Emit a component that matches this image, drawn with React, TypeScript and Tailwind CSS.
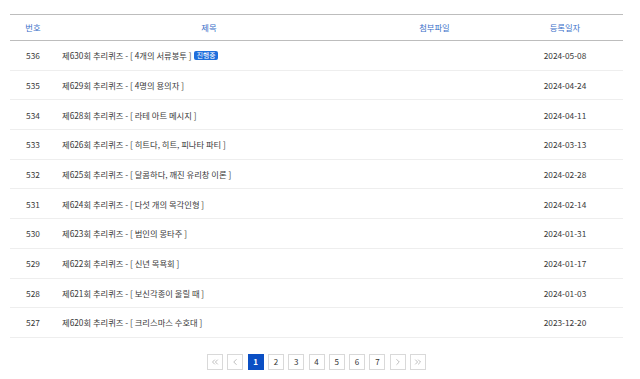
import { ChevronLeft, ChevronRight, ChevronsLeft, ChevronsRight } from 'lucide-react';

const rows = [
  { no: 536, title: '제630회 추리퀴즈 - [ 4개의 서류봉투 ]', date: '2024-05-08', live: true },
  { no: 535, title: '제629회 추리퀴즈 - [ 4명의 용의자 ]', date: '2024-04-24' },
  { no: 534, title: '제628회 추리퀴즈 - [ 라테 아트 메시지 ]', date: '2024-04-11' },
  { no: 533, title: '제626회 추리퀴즈 - [ 히트다, 히트, 피나타 파티 ]', date: '2024-03-13' },
  { no: 532, title: '제625회 추리퀴즈 - [ 달콤하다, 깨진 유리창 이론 ]', date: '2024-02-28' },
  { no: 531, title: '제624회 추리퀴즈 - [ 다섯 개의 목각인형 ]', date: '2024-02-14' },
  { no: 530, title: '제623회 추리퀴즈 - [ 범인의 몽타주 ]', date: '2024-01-31' },
  { no: 529, title: '제622회 추리퀴즈 - [ 신년 목욕회 ]', date: '2024-01-17' },
  { no: 528, title: '제621회 추리퀴즈 - [ 보신각종이 울릴 때 ]', date: '2024-01-03' },
  { no: 527, title: '제620회 추리퀴즈 - [ 크리스마스 수호대 ]', date: '2023-12-20' },
];

const pageBtn = 'flex h-[16px] w-[16px] items-center justify-center border border-[#d9d9d9] text-[8px] text-[#333]';

export default function App() {
  return (
    <div className="w-[640px] h-[379px] bg-white pt-[14px] font-['Noto_Sans_CJK_KR','Noto_Sans',sans-serif] text-[8.3px] text-[#3a3a3a]">
      <div className="ml-[10px] w-[613px]">
        <div className="flex h-[27px] items-center border-t border-b border-[#bdbdbd] text-[#3b6fc9]">
          <div className="w-[46px] text-center">번호</div>
          <div className="w-[306px] text-center">제목</div>
          <div className="w-[145px] text-center">첨부파일</div>
          <div className="w-[116px] text-center">등록일자</div>
        </div>
        {rows.map((r) => (
          <div key={r.no} className="flex h-[29.7px] items-center border-b border-[#eeeeee]">
            <div className="w-[46px] text-center">{r.no}</div>
            <div className="flex w-[306px] items-center pl-[6px]">
              <span>{r.title}</span>
              {r.live && (
                <span className="ml-[2px] rounded-[2px] bg-[#1f6fdc] px-[3px] text-[6.8px] leading-[9.5px] text-white">
                  진행중
                </span>
              )}
            </div>
            <div className="w-[145px]" />
            <div className="w-[116px] text-center">{r.date}</div>
          </div>
        ))}
        <div className="mt-[16px] flex justify-center gap-[4.3px]">
          <div className={pageBtn}>
            <ChevronsLeft size={10} strokeWidth={1.4} color="#8f8f8f" />
          </div>
          <div className={pageBtn}>
            <ChevronLeft size={10} strokeWidth={1.4} color="#8f8f8f" />
          </div>
          <div className="flex h-[16px] w-[16px] items-center justify-center border border-[#0b4fc4] bg-[#0b4fc4] text-[8px] font-bold text-white">
            1
          </div>
          {['2', '3', '4', '5', '6', '7'].map((p) => (
            <div key={p} className={pageBtn}>
              {p}
            </div>
          ))}
          <div className={pageBtn}>
            <ChevronRight size={10} strokeWidth={1.4} color="#8f8f8f" />
          </div>
          <div className={pageBtn}>
            <ChevronsRight size={10} strokeWidth={1.4} color="#8f8f8f" />
          </div>
        </div>
      </div>
    </div>
  );
}
